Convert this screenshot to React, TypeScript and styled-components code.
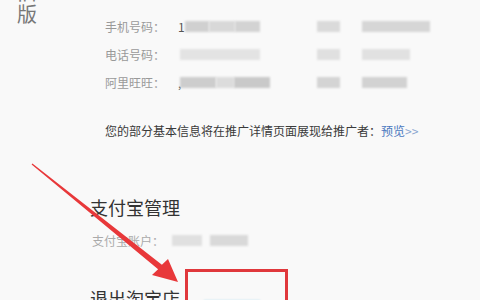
import styled, { createGlobalStyle } from "styled-components";

const GlobalStyle = createGlobalStyle`
  html, body {
    margin: 0;
    padding: 0;
    height: 100%;
    overflow: hidden;
    background: #f9f9f9;
  }
  body {
    font-family: "Noto Sans CJK SC", "Noto Sans", "Liberation Sans", sans-serif;
  }
`;

const Page = styled.div`
  position: relative;
  display: flex;
  width: 480px;
  height: 300px;
  overflow: hidden;
  background: #f9f9f9;
`;

const Aside = styled.div`
  width: 90px;
  flex-shrink: 0;
  padding-left: 17px;
  box-sizing: border-box;
`;

const VerticalTitle = styled.div`
  width: 20px;
  margin-top: -19px;
  font-size: 20px;
  line-height: 22px;
  color: #777;
  word-break: break-all;
`;

const Main = styled.div`
  display: flex;
  flex-direction: column;
  flex: 1;
`;

const InfoList = styled.div`
  display: flex;
  flex-direction: column;
  padding: 12px 0 0 15px;
`;

const InfoRow = styled.div`
  display: grid;
  grid-template-columns: 73px 1fr;
  align-items: center;
  height: 28px;
`;

const Label = styled.span`
  font-size: 12px;
  color: #999;
  white-space: nowrap;
`;

const Value = styled.div`
  display: flex;
  align-items: center;
`;

const Plain = styled.span<{ $w?: number }>`
  font-size: 12px;
  color: #555;
  width: ${(p) => p.$w ?? 7}px;
`;

const Blur = styled.span<{ $w: number; $c: string; $ml?: number }>`
  display: inline-block;
  width: ${(p) => p.$w}px;
  height: 11px;
  margin-left: ${(p) => p.$ml ?? 0}px;
  background: ${(p) => p.$c};
  filter: blur(1px);
`;

const Notice = styled.p`
  margin: 25px 0 0 15px;
  font-size: 12px;
  line-height: 20px;
  color: #3a3a3a;
  white-space: nowrap;
`;

const Preview = styled.a`
  color: #4a78c0;
  text-decoration: none;

  span {
    color: #8aa6d0;
  }
`;

const SectionTitle = styled.h2`
  margin: 52px 0 0;
  font-size: 18px;
  font-weight: normal;
  line-height: 28px;
  color: #333;
`;

const AccountRow = styled.div`
  display: flex;
  align-items: center;
  height: 20px;
  margin: 11px 0 0 2px;
  gap: 8px;
`;

const AccountLabel = styled(Label)`
  color: #aaa;
`;

const LogoutRow = styled.div`
  display: flex;
  align-items: flex-start;
  margin-top: 20px;
`;

const LogoutTitle = styled.span`
  margin-top: 15px;
  font-size: 18px;
  line-height: 28px;
  color: #333;
`;

const Highlight = styled.div`
  width: 103px;
  height: 52px;
  margin-left: 5px;
  box-sizing: border-box;
  border: 3px solid #e0383c;
  padding: 20px 0 0 16px;
`;

const Arrow = styled.svg`
  position: absolute;
  left: 0;
  top: 0;
  pointer-events: none;
`;

function Blurred({ items }: { items: [number, string, number?][] }) {
  return (
    <>
      {items.map(([w, c, ml], i) => (
        <Blur key={i} $w={w} $c={c} $ml={ml} />
      ))}
    </>
  );
}

function App() {
  return (
    <>
      <GlobalStyle />
      <Page>
        <Aside>
          <VerticalTitle>旧版</VerticalTitle>
        </Aside>
        <Main>
          <InfoList>
            <InfoRow>
              <Label>手机号码：</Label>
              <Value>
                <Plain>1</Plain>
                <Blurred
                  items={[
                    [24, "#d0d0d0"],
                    [26, "#d8d8d8"],
                    [25, "#d3d3d3"],
                    [23, "#dadada", 57],
                    [68, "#d6d6d6", 22],
                  ]}
                />
              </Value>
            </InfoRow>
            <InfoRow>
              <Label>电话号码：</Label>
              <Value>
                <Blurred
                  items={[
                    [80, "#e3e3e3", 2],
                    [23, "#e0e0e0", 57],
                    [48, "#e1e1e1", 22],
                  ]}
                />
              </Value>
            </InfoRow>
            <InfoRow>
              <Label>阿里旺旺：</Label>
              <Value>
                <Plain $w={2}>,</Plain>
                <Blurred
                  items={[
                    [36, "#cdcdcd"],
                    [18, "#dcdcdc"],
                    [36, "#c9c9c9"],
                    [23, "#d4d4d4", 47],
                    [45, "#d2d2d2", 22],
                  ]}
                />
              </Value>
            </InfoRow>
          </InfoList>
          <Notice>
            您的部分基本信息将在推广详情页面展现给推广者：
            <Preview href="#">
              预览<span>&gt;&gt;</span>
            </Preview>
          </Notice>
          <SectionTitle>支付宝管理</SectionTitle>
          <AccountRow>
            <AccountLabel>支付宝账户：</AccountLabel>
            <Blurred
              items={[
                [30, "#e0e0e0"],
                [38, "#d9d9d9"],
              ]}
            />
          </AccountRow>
          <LogoutRow>
            <LogoutTitle>退出淘宝店</LogoutTitle>
            <Highlight>
              <Blur $w={56} $c="#c9e6f2" />
            </Highlight>
          </LogoutRow>
        </Main>
        <Arrow width="480" height="300" viewBox="0 0 480 300">
          <polygon
            points="32.4,163.5 161.9,264.7 168,259 178,282 152,275 158.1,269.3 31.6,164.5"
            fill="#e8383a"
          />
        </Arrow>
      </Page>
    </>
  );
}

export default App;
